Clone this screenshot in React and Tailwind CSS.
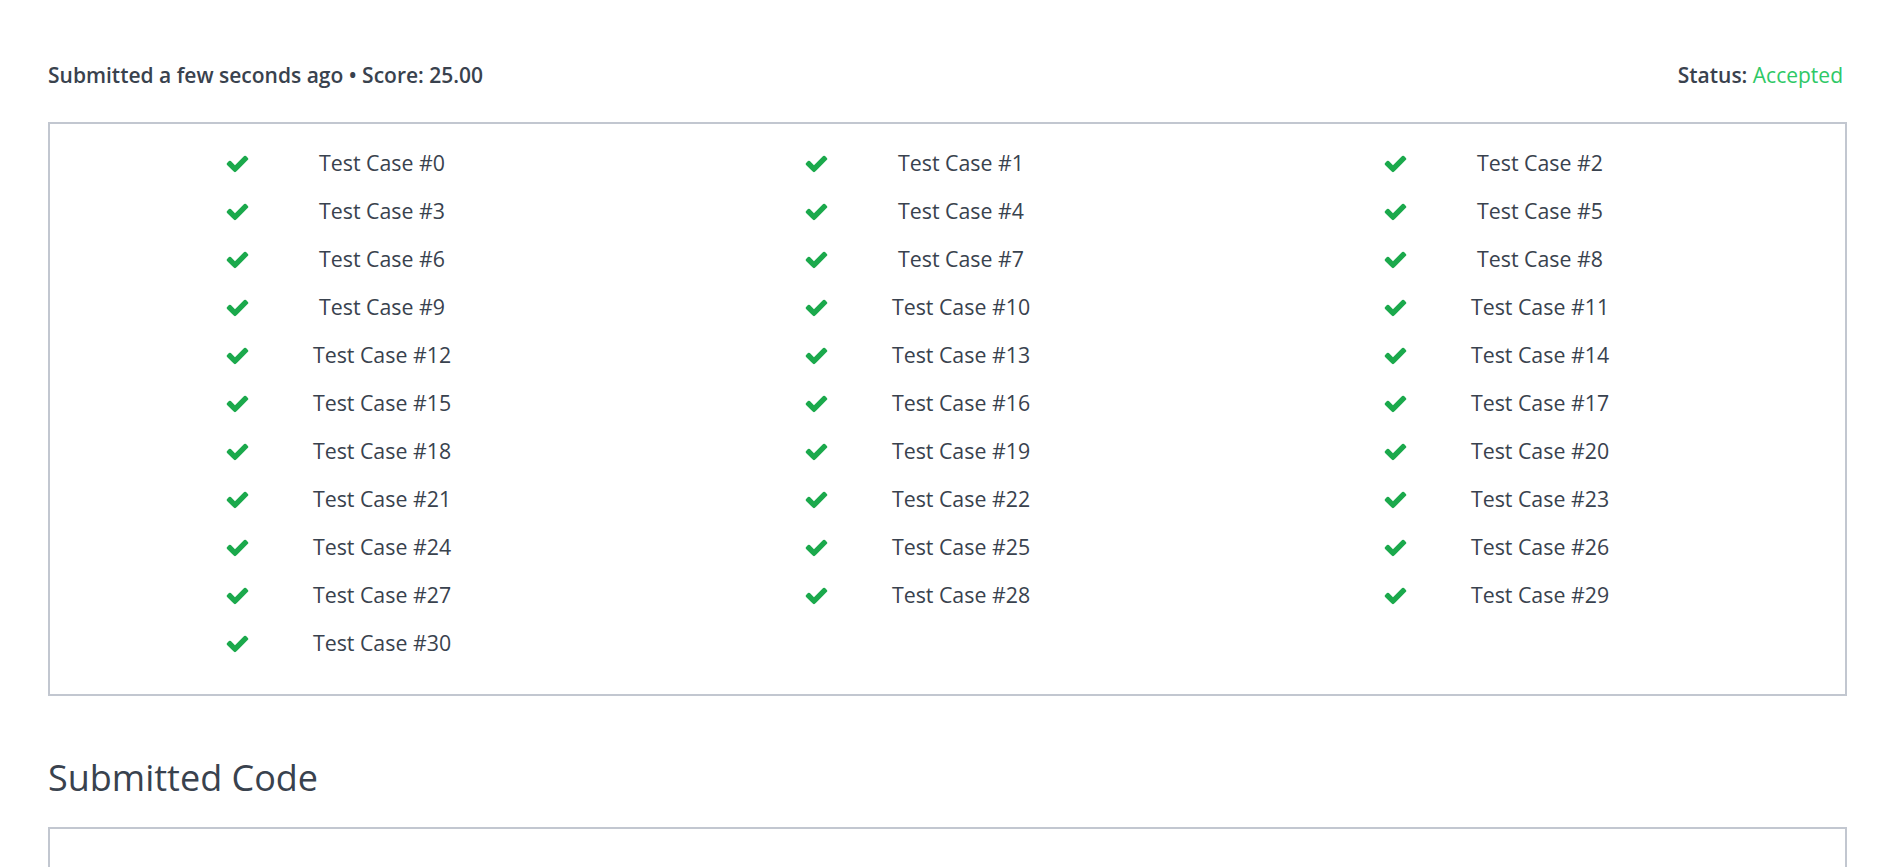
import { Fragment } from "react";

const CASES = Array.from({ length: 31 }, (_, i) => i);

const CheckIcon = () => (
  <svg
    viewBox="0 0 1792 1792"
    className="h-[25px] w-[25px] shrink-0 fill-[#1ba94c]"
    aria-hidden="true"
  >
    <path d="M1671 566q0 40-28 68l-724 724-136 136q-28 28-68 28t-68-28l-136-136-362-362q-28-28-28-68t28-68l136-136q28-28 68-28t68 28l294 295 656-657q28-28 68-28t68 28l136 136q28 28 28 68z" />
  </svg>
);

const TestCase = ({ index }) => (
  <div className="flex h-[48px] items-center pl-[145px]">
    <CheckIcon />
    <span className="ml-[32px] w-[200px] text-center">Test Case #{index}</span>
  </div>
);

export default function App() {
  return (
    <div className="min-h-screen bg-white font-['Open_Sans',sans-serif] text-[21.33px] text-[#39424e]">
      <div className="pl-[48px] pr-[47px] pt-[60px]">
        {/* submission summary */}
        <div className="flex items-center justify-between text-[21px] font-semibold leading-[30px]">
          <span>Submitted a few seconds ago • Score: 25.00</span>
          <span className="pr-[4px]">
            Status: <span className="font-normal text-[#2ec866]">Accepted</span>
          </span>
        </div>

        {/* test cases */}
        <div className="mt-[32px] grid grid-cols-3 border-2 border-[#c2c7d0] pb-[27px] pl-[30px] pr-[28px] pt-[15px]">
          {CASES.map((i) => (
            <Fragment key={i}>
              <TestCase index={i} />
            </Fragment>
          ))}
        </div>

        <h2 className="mt-[58px] text-[36px] leading-[48px]">Submitted Code</h2>

        <div className="mt-[25px] h-[200px] border-2 border-[#c2c7d0] px-[30px] pt-[32px]">
          <div className="flex items-center justify-between text-[18px]">
            <span>
              Language: <span className="ml-[60px]">Python 3</span>
            </span>
            <span className="mr-[150px] text-[#0e72ed]">∞</span>
          </div>
        </div>
      </div>
    </div>
  );
}
